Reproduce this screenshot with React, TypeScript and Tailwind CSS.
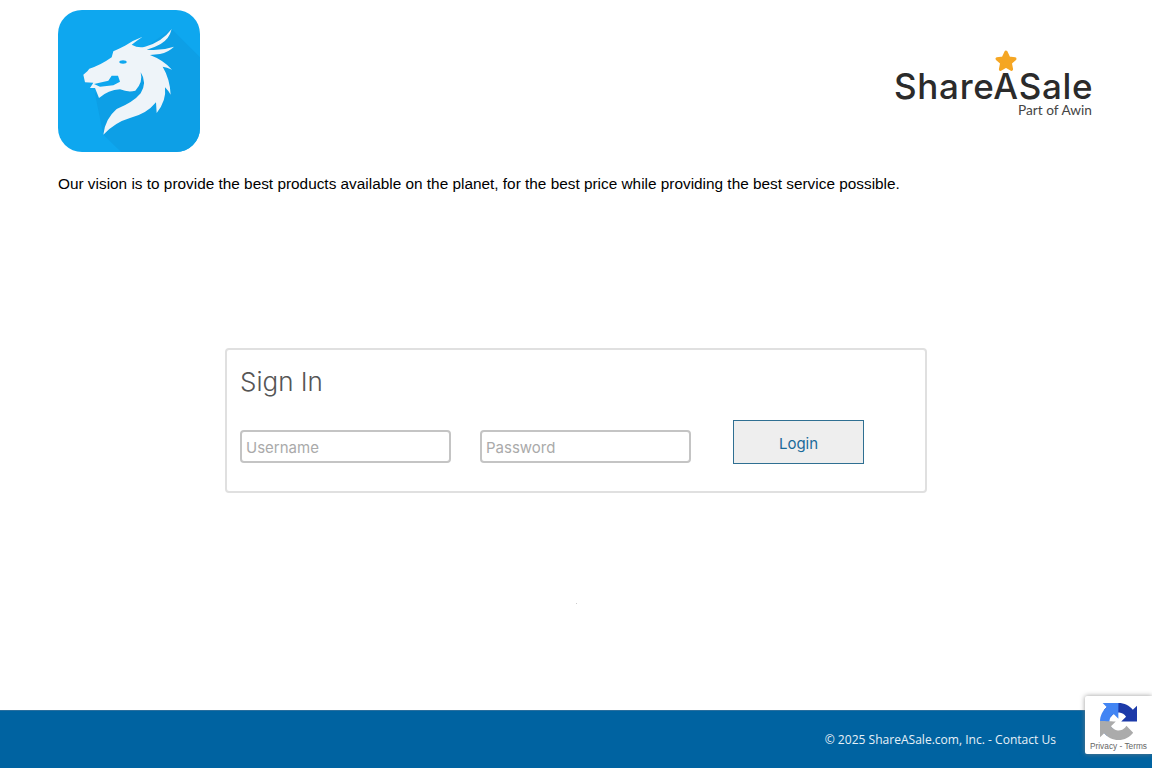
// Sign-in page: logos, vision line, login card, footer and reCAPTCHA badge.

function DragonLogo() {
  return (
    <svg viewBox="24 28 426 426" className="h-[142px] w-[142px] rounded-[24px] bg-[#0ea7ef]">
      <polygon points="365,85 480,200 480,480 240,480 160,402 135,280 200,200" fill="#0d9fe6" />
      <path
        d="M100 222 L112 212 L118 204 Q150 195 185 170 L190 152 Q205 145 225 135 Q250 118 278 108 Q260 120 245 132 Q265 143 285 138 Q335 125 365 85 Q358 115 332 130 Q315 140 290 147 Q330 152 372 138 Q355 155 330 160 L300 163 Q340 178 366 207 Q350 200 338 198 Q360 235 362 282 Q355 270 345 260 Q350 300 320 337 L318 305 Q290 340 240 352 Q195 365 160 402 Q165 355 200 325 Q250 305 272 278 Q292 245 272 215 Q280 245 256 270 Q235 276 210 266 Q175 268 147 292 L135 262 L120 262 L130 246 L105 245 Z"
        fill="#eef4f9"
      />
      <path d="M132 250 L175 240 L185 225 L204 225 L210 243 L190 254 L150 258 Z" fill="#0ea7ef" />
      <ellipse cx="219" cy="184" rx="11" ry="5" fill="#0ea7ef" />
    </svg>
  );
}

function ShareASaleLogo() {
  return (
    <div className="flex w-[198px] flex-col items-end font-['Inter',sans-serif]">
      <svg viewBox="0 0 24 24" className="mt-[-3px] mr-[74px] mb-[-2px] h-[24px] w-[24px]">
        <polygon
          points="12,3 14.8,9 21,9.8 16.4,14 17.6,20.4 12,17.2 6.4,20.4 7.6,14 3,9.8 9.2,9"
          fill="#f5a623"
          stroke="#f5a623"
          strokeWidth="3"
          strokeLinejoin="round"
        />
      </svg>
      <div className="h-[30px] w-full text-[35px] leading-[30px] font-medium tracking-[0.7px] whitespace-nowrap text-[#2b2b2b]">
        ShareASale
      </div>
      <div className="text-[13.7px] leading-[18px] font-['Lato',sans-serif] text-[#444]">Part of Awin</div>
    </div>
  );
}

function RecaptchaIcon() {
  return (
    <svg viewBox="0 0 64 64" className="h-[37px] w-[37px]">
      <path
        d="M64 31.955l-.033-1.37V4.687l-7.16 7.16C50.948 4.674 42.033.093 32.05.093c-10.4 0-19.622 4.96-25.458 12.64l11.736 11.86a15.55 15.55 0 0 1 4.75-5.333c2.05-1.6 4.952-2.906 8.973-2.906.486 0 .86.057 1.135.163 4.982.393 9.3 3.142 11.843 7.132l-8.307 8.307c10.52-.04 22.404-.065 27.268.1"
        fill="#1c3aa9"
      />
      <path
        d="M31.862.094l-1.37.033H4.594l7.16 7.16C4.58 13.147 0 22.06 0 32.046c0 10.4 4.96 19.622 12.64 25.458l11.86-11.736a15.55 15.55 0 0 1-5.334-4.75c-1.6-2.05-2.906-4.952-2.906-8.973 0-.486.057-.86.163-1.135.393-4.982 3.142-9.3 7.132-11.843l8.307 8.307C31.82 17.853 31.796 5.97 31.96 1.105"
        fill="#4285f4"
      />
      <path
        d="M.001 32.045l.033 1.37v25.898l7.16-7.16C13.053 59.326 21.968 63.907 31.95 63.907c10.4 0 19.622-4.96 25.458-12.64L45.672 39.407a15.55 15.55 0 0 1-4.75 5.334c-2.05 1.6-4.952 2.906-8.973 2.906-.486 0-.86-.057-1.135-.163-4.982-.393-9.3-3.142-11.843-7.132l8.307-8.307C16.758 31.085 4.874 31.11.01 30.945"
        fill="#ababab"
      />
    </svg>
  );
}

export default function App() {
  return (
    <div className="relative flex h-screen flex-col overflow-hidden bg-white font-['Liberation_Sans',sans-serif]">
      <header className="flex items-start justify-between pt-[10px] pr-[60px] pl-[58px]">
        <DragonLogo />
        <div className="mt-[42px]">
          <ShareASaleLogo />
        </div>
      </header>

      <p className="mt-[23px] pl-[58px] text-[15.36px] leading-[18px] text-black">
        Our vision is to provide the best products available on the planet, for the best price while
        providing the best service possible.
      </p>

      <main className="flex flex-1 flex-col items-center pt-[155px]">
        <div className="h-[145px] w-[702px] rounded-[4px] border-2 border-[#e0e0e0] px-[13px] font-['Inter',sans-serif]">
          <h2 className="mt-[16px] text-[26px] leading-[32px] font-light text-[#555]">Sign In</h2>
          <form className="mt-[22px] flex items-start">
            <input
              placeholder="Username"
              className="mt-[10px] h-[33px] w-[211px] rounded-[4px] border-2 border-[#c4c4c4] px-[4px] pt-[2px] text-[15px] placeholder:text-[#aaa]"
            />
            <input
              type="password"
              placeholder="Password"
              className="mt-[10px] ml-[29px] h-[33px] w-[211px] rounded-[4px] border-2 border-[#c4c4c4] px-[4px] pt-[2px] text-[15px] placeholder:text-[#aaa]"
            />
            <button
              type="button"
              className="ml-[42px] h-[44px] w-[131px] border border-[#2f6f92] bg-[#eee] pt-[4px] text-[15px] text-[#1a6a9a]"
            >
              Login
            </button>
          </form>
        </div>
        <div className="mt-[110px] h-px w-px bg-[#ccc]" />
      </main>

      <footer className="flex h-[58px] items-center justify-end border-t border-[#2a6f9e] bg-[#0063a1] pt-[1px] pr-[96px] font-['Open_Sans',sans-serif] text-[12.05px] text-[#e6f0f7]">
        © 2025 ShareASale.com, Inc. - Contact Us
      </footer>

      <div className="absolute top-[696px] right-0 flex h-[58px] w-[67px] flex-col items-center rounded-l-[2px] bg-white pt-[7px] font-['Liberation_Sans',sans-serif] shadow-[0_0_5px_rgba(128,128,128,0.8)]">
        <RecaptchaIcon />
        <span className="mt-[1px] text-[8.3px] leading-[11px] whitespace-nowrap text-[#666]">Privacy - Terms</span>
      </div>
    </div>
  );
}
